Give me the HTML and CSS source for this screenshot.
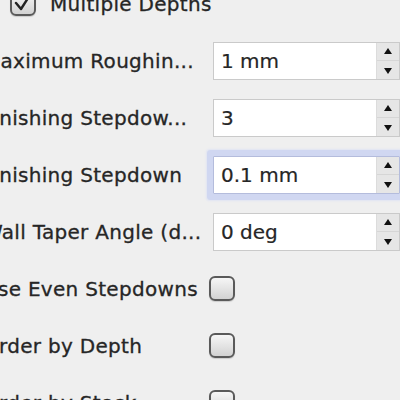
FILE: index.html
```html
<!DOCTYPE html>
<html>
<head>
<meta charset="utf-8">
<link rel="stylesheet" href="styles.css">
</head>
<body>
<div class="panel">
  <div class="row head">
    <span class="check checked">
      <svg viewBox="0 0 26 25" width="26" height="25"><path d="M6 12 L11 18 L20 4" fill="none" stroke="#222" stroke-width="2.4" stroke-linecap="round" stroke-linejoin="round"/></svg>
    </span>
    <span class="head-label">Multiple Depths</span>
  </div>
  <div class="row">
    <span class="label">Maximum Roughin...</span>
    <div class="field"><span class="value">1 mm</span><span class="spin"><span class="up"></span><span class="down"></span></span></div>
  </div>
  <div class="row">
    <span class="label">Finishing Stepdow...</span>
    <div class="field"><span class="value">3</span><span class="spin"><span class="up"></span><span class="down"></span></span></div>
  </div>
  <div class="row">
    <span class="label">Finishing Stepdown</span>
    <div class="field focus"><span class="value">0.1 mm</span><span class="spin"><span class="up"></span><span class="down"></span></span></div>
  </div>
  <div class="row">
    <span class="label">Wall Taper Angle (d...</span>
    <div class="field"><span class="value">0 deg</span><span class="spin"><span class="up"></span><span class="down"></span></span></div>
  </div>
  <div class="row">
    <span class="label">Use Even Stepdowns</span>
    <span class="check box"></span>
  </div>
  <div class="row">
    <span class="label">Order by Depth</span>
    <span class="check box"></span>
  </div>
  <div class="row">
    <span class="label">Order by Stock</span>
    <span class="check box"></span>
  </div>
</div>
</body>
</html>
```
FILE: styles.css
```css
html, body {
  margin: 0;
  padding: 0;
  background: #efefef;
  overflow: hidden;
  height: 400px;
}
.panel {
  margin-top: -25px;
  margin-left: -17px;
  font-family: "DejaVu Sans", sans-serif;
  font-size: 20px;
  color: #262626;
}
.row {
  height: 57px;
  display: flex;
  align-items: center;
}
.label {
  width: 230px;
  flex: none;
  white-space: nowrap;
  overflow: hidden;
  letter-spacing: 0.3px;
  -webkit-text-stroke: 0.3px #262626;
}
.head {
  padding-left: 27px;
}
.head-label {
  margin-left: 14px;
  letter-spacing: 0.3px;
  -webkit-text-stroke: 0.3px #262626;
}
.field {
  flex: none;
  width: 187px;
  height: 38px;
  box-sizing: border-box;
  border: 1px solid #cacaca;
  background: #fff;
  display: flex;
  align-items: stretch;
}
.field.focus {
  border-color: #b4bcdc;
  border-radius: 1px;
  box-shadow: 0 0 0 6px #d0d7f1, 0 0 2px 7px #e0e4f3;
}
.value {
  flex: 1;
  padding-left: 7px;
  display: flex;
  align-items: center;
  -webkit-text-stroke: 0.2px #262626;
}
.spin {
  width: 22px;
  flex: none;
  background: #e6e6e6;
  border-left: 1px solid #dcdcdc;
  display: flex;
  flex-direction: column;
}
.up, .down {
  flex: 1;
  position: relative;
}
.up {
  border-bottom: 1px solid #d6d6d6;
}
.up::after, .down::after {
  content: "";
  position: absolute;
  left: 50%;
  top: 50%;
  margin-left: -4px;
  border-left: 4px solid transparent;
  border-right: 4px solid transparent;
}
.up::after {
  margin-top: -3px;
  border-bottom: 6px solid #111;
}
.down::after {
  margin-top: -2px;
  border-top: 6px solid #111;
}
.check {
  flex: none;
  width: 26px;
  height: 25px;
  box-sizing: border-box;
  border: 2px solid #5a5a5a;
  border-radius: 6px;
  background: linear-gradient(#f6f6f6, #d2d2d2);
  box-shadow: 0 1px 1px rgba(0,0,0,0.15);
  display: block;
}
.check svg {
  display: block;
  margin: -2px;
}
.box {
  margin-left: -4px;
}
```
